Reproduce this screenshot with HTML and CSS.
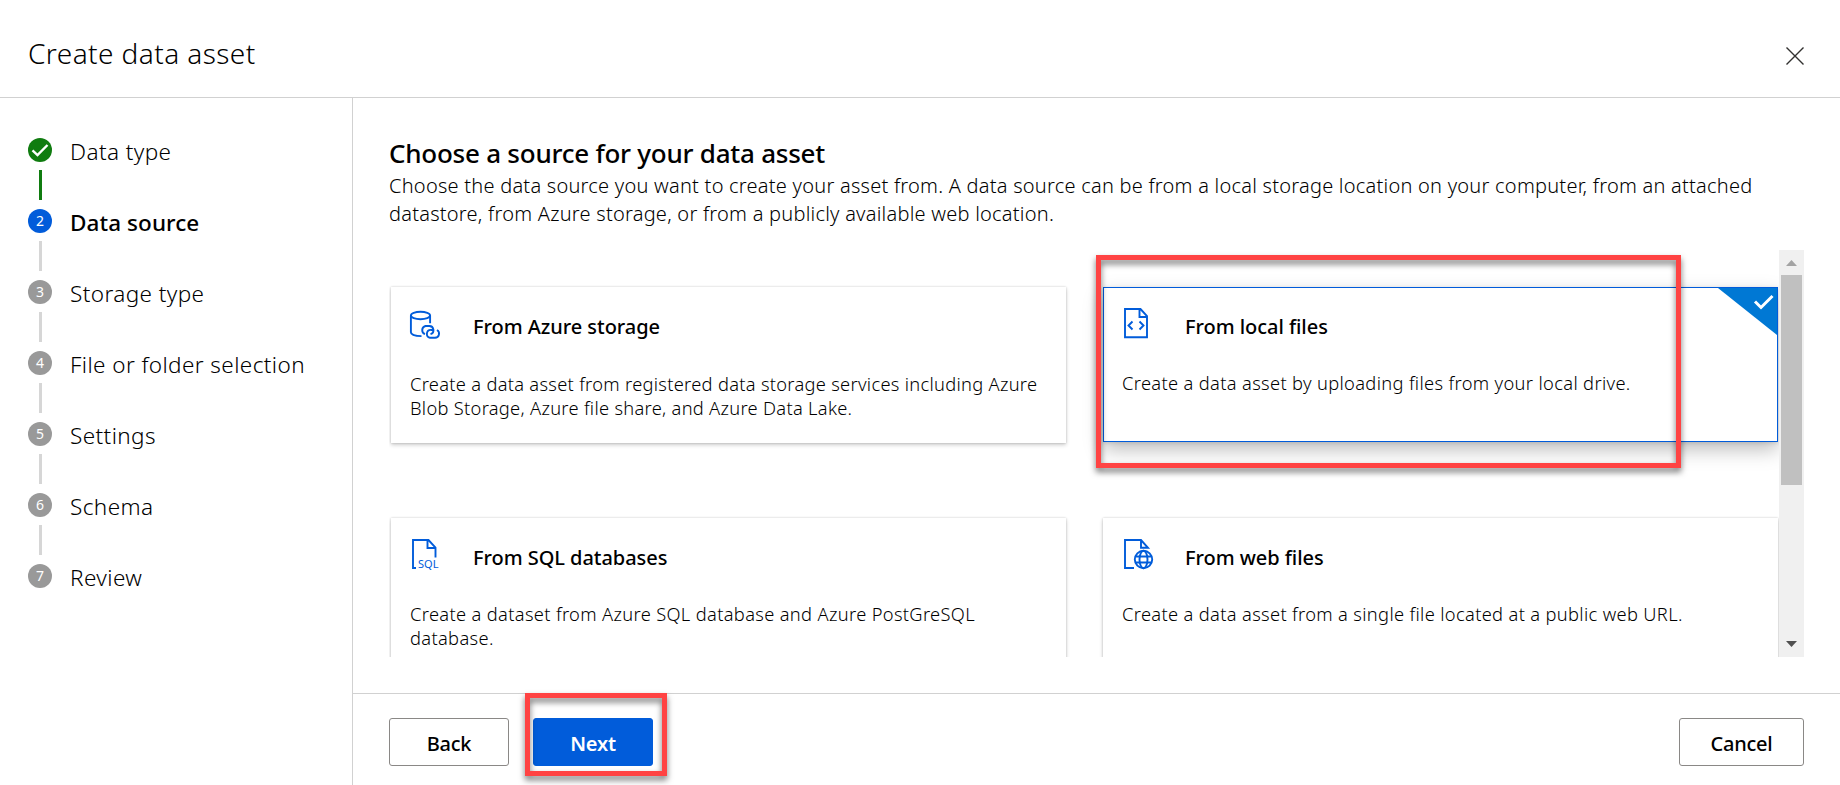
FILE: index.html
```html
<!DOCTYPE html>
<html lang="en">
<head>
<meta charset="utf-8">
<title>Create data asset</title>
<link rel="stylesheet" href="styles.css">
</head>
<body>
<div class="dialog">
  <header class="header">
    <h1 class="title">Create data asset</h1>
    <svg class="close" viewBox="0 0 18 18" width="18" height="18"><path d="M.5 .5l17 17M17.500 .5l-17 17"/></svg>
  </header>
  <div class="body">
    <nav class="steps">
      <div class="step done"><div class="rail"><span class="dot"><svg viewBox="0 0 24 24" width="24" height="24"><path d="M4.500 12.300l5 4.700 10-10"/></svg></span><i class="line"></i></div><span class="label">Data type</span></div>
      <div class="step current"><div class="rail"><span class="dot">2</span><i class="line"></i></div><span class="label">Data source</span></div>
      <div class="step"><div class="rail"><span class="dot">3</span><i class="line"></i></div><span class="label">Storage type</span></div>
      <div class="step"><div class="rail"><span class="dot">4</span><i class="line"></i></div><span class="label">File or folder selection</span></div>
      <div class="step"><div class="rail"><span class="dot">5</span><i class="line"></i></div><span class="label">Settings</span></div>
      <div class="step"><div class="rail"><span class="dot">6</span><i class="line"></i></div><span class="label">Schema</span></div>
      <div class="step"><div class="rail"><span class="dot">7</span></div><span class="label">Review</span></div>
    </nav>
    <div class="main">
      <section class="content">
        <h2 class="heading">Choose a source for your data asset</h2>
        <p class="intro">Choose the data source you want to create your asset from. A data source can be from a local storage location on your computer, from an attached<br>datastore, from Azure storage, or from a publicly available web location.</p>
        <div class="scroller">
          <div class="cards">
            <article class="card">
              <div class="card-head">
                <svg class="icon" viewBox="0 0 32 32" width="32" height="32"><ellipse cx="10.500" cy="8.500" rx="9.600" ry="3.700"/><path d="M.9 8.500v16.800c0 2.200 4.500 3.800 10.600 3.800M20.100 8.500v7.800"/><path d="M15 27.200a4.300 4.300 0 0 1 .5-8.200h3.500a4.200 4.200 0 0 1 1.500 8.200M23.500 23h-2a3.900 3.900 0 0 0-.5-.1a4 4 0 0 0-1 7.900h5a4.200 4.200 0 0 0 2-7.800"/></svg>
                <h3>From Azure storage</h3>
              </div>
              <p>Create a data asset from registered data storage services including Azure<br>Blob Storage, Azure file share, and Azure Data Lake.</p>
            </article>
            <article class="card selected">
              <div class="card-head">
                <svg class="icon" viewBox="0 0 32 32" width="32" height="32"><path d="M3 2h15.500l6.500 7v21.300H3zM17.500 2v8H25"/><path d="M10.500 14.500l-4 4 4 4M17.500 14.500l4 4-4 4"/></svg>
                <h3>From local files</h3>
              </div>
              <p>Create a data asset by uploading files from your local drive.</p>
              <svg class="corner" viewBox="0 0 60 48" width="60" height="48"><path class="fill" d="M1 0h59v47z"/><path class="tick" d="M38 13.500l6 6 11.500-11.500"/></svg>
            </article>
            <article class="card lower">
              <div class="card-head">
                <svg class="icon" viewBox="0 0 32 32" width="32" height="32"><path d="M6 30H3V2h15.500l7 7.500v10M17.500 2v8h8"/><text class="sql" x="8" y="30">SQL</text></svg>
                <h3>From SQL databases</h3>
              </div>
              <p>Create a dataset from Azure SQL database and Azure PostGreSQL<br>database.</p>
            </article>
            <article class="card lower">
              <div class="card-head">
                <svg class="icon" viewBox="0 0 32 32" width="32" height="32"><path d="M12 30H3V2h16l7 7.800h-7V2"/><circle cx="21.500" cy="21.500" r="8.700"/><ellipse cx="21.500" cy="21.500" rx="4" ry="8.700"/><path d="M13.500 18.500h16M13.500 24.500h16"/></svg>
                <h3>From web files</h3>
              </div>
              <p>Create a data asset from a single file located at a public web URL.</p>
            </article>
          </div>
          <div class="scrollbar">
            <svg viewBox="0 0 25 25" width="25" height="25"><path class="up" d="M7 16h11l-5.500-6z"/></svg>
            <div class="thumb"></div>
            <svg viewBox="0 0 25 25" width="25" height="25"><path class="down" d="M7 9h11l-5.500 6z"/></svg>
          </div>
          <div class="mark mark-card"></div>
        </div>
      </section>
      <footer class="footer">
        <button class="btn">Back</button>
        <div class="next-wrap"><button class="btn primary">Next</button><div class="mark mark-next"></div></div>
        <button class="btn cancel">Cancel</button>
      </footer>
    </div>
  </div>
</div>
</body>
</html>
```
FILE: styles.css
```css
* { box-sizing: border-box; }
body {
  margin: 0;
  background: #fff;
  color: #000;
  font-family: "Noto Sans", "Open Sans", sans-serif;
}
h1, h2, h3, p { margin: 0; font-weight: 350; white-space: nowrap; }
.dialog { width: 1840px; height: 785px; display: flex; flex-direction: column; overflow: hidden; }
.header {
  height: 98px;
  flex: none;
  padding: 10px 36px 0 28px;
  display: flex;
  align-items: center;
  justify-content: space-between;
  border-bottom: 1px solid #d1d1d1;
}
.title { font-size: 28px; line-height: 36px; margin-top: -2px; letter-spacing: .42px; }
.close { margin: 5px 0 0; fill: none; stroke: #323130; stroke-width: 1.4; }
.body { flex: 1; display: flex; min-height: 0; }
.steps { width: 353px; flex: none; padding: 40px 0 0 28px; border-right: 1px solid #d1d1d1; }
.step { display: flex; gap: 18px; height: 71px; }
.rail { width: 24px; display: flex; flex-direction: column; align-items: center; gap: 8px; }
.dot {
  width: 24px;
  height: 24px;
  border-radius: 50%;
  background: #999;
  color: #fff;
  font-size: 14px;
  line-height: 24px;
  text-align: center;
}
.dot svg { display: block; fill: none; stroke: #fff; stroke-width: 2.4; }
.line { width: 3px; height: 30px; margin-left: 1px; background: #d6d6d6; }
.done .dot, .done .line { background: #107c10; }
.current .dot { background: #015cda; }
.label { font-size: 22.5px; line-height: 28px; font-weight: 350; letter-spacing: .41px; white-space: nowrap; }
.current .label { font-weight: 550; letter-spacing: .08px; }
.main { flex: 1; min-width: 0; display: flex; flex-direction: column; }
.content { height: 595px; padding: 36px 36px 0; }
.heading { font-size: 26px; line-height: 38px; font-weight: 550; letter-spacing: -.243px; }
.intro { font-size: 20px; line-height: 28px; letter-spacing: .238px; }
.scroller { position: relative; height: 407px; margin-top: 22px; display: flex; }
.cards {
  width: 1390px;
  height: 407px;
  overflow: hidden;
  display: grid;
  grid-template-columns: 675px 675px;
  grid-auto-rows: 156px;
  column-gap: 37px;
  row-gap: 75px;
  padding: 37px 0 0 2px;
}
.card {
  position: relative;
  padding: 20px 19px;
  background: #fff;
  box-shadow: 0 2px 4px rgba(0,0,0,.2), 0 0 2px rgba(0,0,0,.18);
}
.card.selected { border: 1px solid #015cda; height: 155px; padding: 19px 18px; box-shadow: 0 8px 18px rgba(0,0,0,.25), 0 1px 4px rgba(0,0,0,.12); }
.card-head { display: flex; gap: 31px; height: 56px; }
.icon { fill: none; stroke: #015cda; stroke-width: 1.900; overflow: visible; }
.sql { fill: #015cda; stroke: none; font-size: 11px; }
.card h3 { font-size: 20px; line-height: 40px; font-weight: 500; letter-spacing: -.05px; }
.card p { font-size: 18.300px; line-height: 24px; padding-top: 9px; letter-spacing: .295px; }
.card.selected p, .lower p { padding-top: 8px; letter-spacing: .34px; }
.corner { position: absolute; top: 0; right: 0; }
.fill { fill: #0078d4; }
.tick { fill: none; stroke: #fff; stroke-width: 3; }
.scrollbar { width: 25px; background: #f0f0f0; display: flex; flex-direction: column; }
.scrollbar svg:last-child { margin-top: auto; }
.thumb { height: 210px; margin: 0 2px; background: #c0c0c0; }
.up { fill: #a3a3a3; }
.down { fill: #505050; }
.mark {
  position: absolute;
  border: 5px solid #ff4343;
  filter: drop-shadow(0 4px 3px rgba(0,0,0,.55));
}
.mark-card { left: 707px; top: 5px; width: 585px; height: 213px; }
.footer { flex: 1; border-top: 1px solid #d1d1d1; padding: 24px 36px 0; display: flex; gap: 24px; }
.btn {
  width: 120px;
  height: 48px;
  padding: 3px 0 0;
  border: 1px solid #8a8886;
  border-radius: 3px;
  background: #fff;
  color: #000;
  font: 500 20px/28px "Noto Sans", sans-serif;
  letter-spacing: -.22px;
}
.primary { background: #015cda; border-color: #015cda; color: #fff; font-weight: 600; }
.cancel { width: 125px; margin-left: auto; }
.next-wrap { position: relative; }
.mark-next { left: -8px; top: -25px; width: 142px; height: 83px; }
```
